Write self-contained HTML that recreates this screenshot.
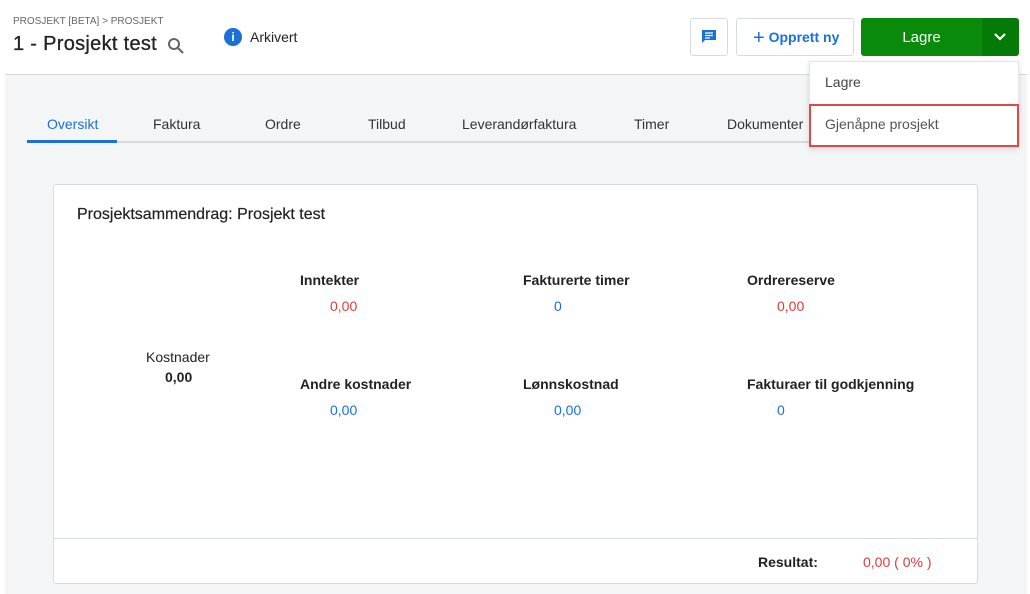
<!DOCTYPE html>
<html><head><meta charset="utf-8"><style>
*{margin:0;padding:0;box-sizing:border-box}
body{width:1030px;height:594px;background:#fff;font-family:"Liberation Sans",Arial,sans-serif;position:relative;overflow:hidden;color:#222}
.abs{position:absolute}
.bg{left:5px;top:74px;width:1022px;height:520px;background:#f4f5f7;border-top:1px solid #d6dbe2}
.tab{top:116px;font-size:14px;color:#333}
.card{left:53px;top:184px;width:925px;height:400px;background:#fff;border:1px solid #d6dbe2;border-radius:3px}
.lbl{font-size:14px;font-weight:bold;color:#222}
.val{font-size:14px}
.red{color:#e03a3a}.blue{color:#1a6fd8}
</style></head><body>
<div class="abs" style="left:13px;top:16px;font-size:10px;color:#666">PROSJEKT [BETA] &gt; PROSJEKT</div>
<div class="abs" style="left:13px;top:33px;font-size:20px;color:#222;letter-spacing:0.3px;-webkit-text-stroke:0.3px #222">1 - Prosjekt test</div>
<svg class="abs" style="left:167px;top:37px" width="18" height="18" viewBox="0 0 18 18"><circle cx="7" cy="7" r="5" fill="none" stroke="#666" stroke-width="2"/><path d="M11 11l5 5" stroke="#666" stroke-width="2.2"/></svg>
<div class="abs" style="left:224px;top:28px;width:18px;height:18px;border-radius:50%;background:#1a6fd8;color:#fff;font-size:12px;font-weight:bold;text-align:center;line-height:18px">i</div>
<div class="abs" style="left:250px;top:29px;font-size:14px;color:#222">Arkivert</div>
<div class="abs" style="left:690px;top:18px;width:38px;height:38px;border:1px solid #d6dbe2;border-radius:3px"></div>
<svg class="abs" style="left:700px;top:28px" width="18" height="18" viewBox="0 0 18 18"><path d="M2 2h14v10H5l-3 3z" fill="#1a6fd8"/><path d="M5 5h8M5 7.5h8M5 10h5" stroke="#fff" stroke-width="1.3"/></svg>
<div class="abs" style="left:736px;top:18px;width:118px;height:38px;border:1px solid #d6dbe2;border-radius:3px;color:#1a6fd8;font-size:14px;font-weight:bold;line-height:36px;padding-left:16px"><span style="font-size:20px;font-weight:normal;vertical-align:-2px">+</span> Opprett ny</div>
<div class="abs" style="left:861px;top:18px;width:121px;height:38px;background:#0a8a0a;border-radius:3px 0 0 3px;color:#fff;font-size:15px;text-align:center;line-height:39px">Lagre</div>
<div class="abs" style="left:982px;top:18px;width:37px;height:38px;background:#067a06;border-radius:0 3px 3px 0"></div>
<svg class="abs" style="left:993px;top:31px" width="14" height="12" viewBox="0 0 14 12"><path d="M2 3l5 5 5-5" stroke="#fff" stroke-width="2.2" fill="none"/></svg>
<div class="bg abs"></div>
<div class="abs" style="left:27px;top:141px;width:785px;height:2px;background:#d6dbe2"></div>
<div class="abs" style="left:27px;top:140px;width:90px;height:3px;background:#1a6fd8"></div>
<div class="tab abs" style="left:47px;color:#1a6fd8">Oversikt</div>
<div class="tab abs" style="left:153px">Faktura</div>
<div class="tab abs" style="left:265px">Ordre</div>
<div class="tab abs" style="left:368px">Tilbud</div>
<div class="tab abs" style="left:462px">Leverandørfaktura</div>
<div class="tab abs" style="left:634px">Timer</div>
<div class="tab abs" style="left:727px">Dokumenter</div>
<div class="abs" style="left:809px;top:61px;width:210px;height:86px;background:#fff;border:1px solid #e2e5ea;box-shadow:0 2px 6px rgba(0,0,0,.12)"></div>
<div class="abs" style="left:825px;top:74px;font-size:14px;color:#444">Lagre</div>
<div class="abs" style="left:809px;top:104px;width:210px;height:43px;border:2px solid #e04848"></div>
<div class="abs" style="left:825px;top:116px;font-size:14px;color:#555">Gjenåpne prosjekt</div>
<div class="card abs">
<div class="abs" style="left:0;top:353px;width:923px;height:1px;background:#d6dbe2"></div>
</div>
<div class="abs" style="left:77px;top:206px;font-size:16px;color:#222;-webkit-text-stroke:0.2px #222">Prosjektsammendrag: Prosjekt test</div>
<div class="abs" style="left:146px;top:349px;font-size:14px">Kostnader</div>
<div class="abs" style="left:165px;top:369px;font-size:14px;font-weight:bold">0,00</div>
<div class="abs lbl" style="left:300px;top:272px">Inntekter</div>
<div class="abs val red" style="left:330px;top:298px">0,00</div>
<div class="abs lbl" style="left:523px;top:272px">Fakturerte timer</div>
<div class="abs val blue" style="left:554px;top:298px">0</div>
<div class="abs lbl" style="left:747px;top:272px">Ordrereserve</div>
<div class="abs val red" style="left:777px;top:298px">0,00</div>
<div class="abs lbl" style="left:300px;top:376px">Andre kostnader</div>
<div class="abs val blue" style="left:330px;top:402px">0,00</div>
<div class="abs lbl" style="left:523px;top:376px">Lønnskostnad</div>
<div class="abs val blue" style="left:554px;top:402px">0,00</div>
<div class="abs lbl" style="left:747px;top:376px">Fakturaer til godkjenning</div>
<div class="abs val blue" style="left:777px;top:402px">0</div>
<div class="abs lbl" style="left:758px;top:554px">Resultat:</div>
<div class="abs val red" style="left:863px;top:554px">0,00 ( 0% )</div>
</body></html>
